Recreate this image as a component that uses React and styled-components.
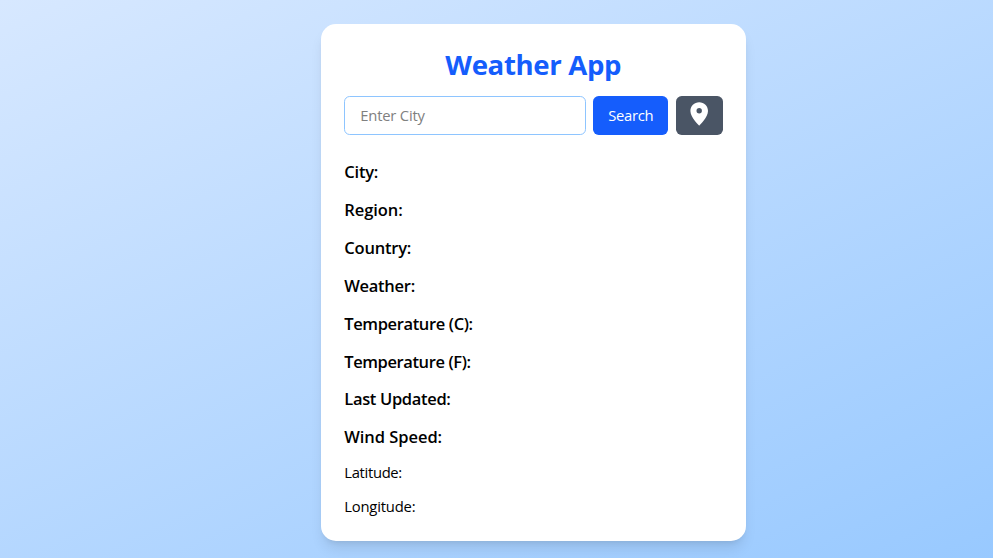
import React from "react";
import styled, { createGlobalStyle } from "styled-components";

const GlobalStyle = createGlobalStyle`
  *, *::before, *::after { box-sizing: border-box; }
  body {
    margin: 0;
    color: #000;
    font-family: "Open Sans", "Noto Sans", sans-serif;
  }
`;

const Page = styled.main`
  min-height: 100vh;
  display: flex;
  justify-content: center;
  align-items: flex-start;
  padding: 24px 0 17px 74px;
  background: linear-gradient(155deg, #d7e8ff, #98c9ff);
  overflow: hidden;
`;

const Card = styled.section`
  width: 425px;
  height: 517px;
  margin-right: 0.5px;
  padding: 22.9px 23px 0;
  border-radius: 15px;
  background: #fff;
  box-shadow: 0 9.5px 14px -3px rgba(0, 0, 0, 0.1), 0 4px 6px -4px rgba(0, 0, 0, 0.1);
`;

const Title = styled.h1`
  margin: 0 0 15px;
  font-size: 27.6px;
  line-height: 34.1px;
  letter-spacing: -0.35px;
  font-weight: 700;
  text-align: center;
  color: #155dfc;
  white-space: nowrap;
`;

const SearchBar = styled.form`
  display: flex;
  height: 39px;
  gap: 7.5px;
  margin-bottom: 24.25px;
`;

const CityInput = styled.input`
  width: 242px;
  padding: 0 15px 0 15.5px;
  border: 1px solid #8ec5ff;
  border-radius: 5.7px;
  outline: none;
  background: #fff;
  font: 400 14.8px "Open Sans", sans-serif;
  letter-spacing: -0.2px;
  &::placeholder { color: #808080; opacity: 1; }
`;

const Button = styled.button`
  display: flex;
  align-items: center;
  justify-content: center;
  width: ${(p) => p.$width}px;
  padding: 0;
  border: 0;
  border-radius: 5.7px;
  background: ${(p) => p.$color};
  color: #fff;
  font: 400 14.8px "Open Sans", sans-serif;
  letter-spacing: -0.35px;
`;

const Pin = styled.svg`
  width: 18px;
  height: 24px;
  margin: 0 0 3px;
`;

const Row = styled.p`
  margin: 0 0 ${(p) => (p.$small ? "12.4px" : "11.37px")} 0.5px;
  font-size: ${(p) => (p.$small ? "14.8px" : "16.5px")};
  font-weight: ${(p) => (p.$small ? 400 : 600)};
  line-height: ${(p) => (p.$small ? "21.4px" : "26.5px")};
  letter-spacing: ${(p) => p.$spacing}px;
`;

const fields = [
  { label: "City:", spacing: -0.2 },
  { label: "Region:", spacing: -0.05 },
  { label: "Country:", spacing: -0.2 },
  { label: "Weather:", spacing: -0.27 },
  { label: "Temperature (C):", spacing: -0.37 },
  { label: "Temperature (F):", spacing: -0.4 },
  { label: "Last Updated:", spacing: -0.33 },
  { label: "Wind Speed:", spacing: -0.05 },
  { label: "Latitude:", small: true, spacing: -0.32 },
  { label: "Longitude:", small: true, spacing: -0.2 },
];

export default function App() {
  return (
    <>
      <GlobalStyle />
      <Page>
        <Card>
          <Title>Weather App</Title>
          <SearchBar onSubmit={(e) => e.preventDefault()}>
            <CityInput placeholder="Enter City" />
            <Button $width={75} $color="#155dfc">Search</Button>
            <Button $width={47} $color="#4a5565" type="button" aria-label="Use my location">
              <Pin viewBox="0 0 18 24" fill="currentColor">
                <path fillRule="evenodd" d="M9.2.3C4.3.3.4 4.2.4 9.1.4 15.4 9.2 23.7 9.2 23.7S18 15.4 18 9.1C18 4.2 14.1.3 9.2.3Zm0 5.7a2.7 2.7 0 1 1 0 5.4A2.7 2.7 0 0 1 9.2 6Z" />
              </Pin>
            </Button>
          </SearchBar>
          {fields.map((f) => (
            <Row key={f.label} $small={f.small} $spacing={f.spacing}>
              {f.label}
            </Row>
          ))}
        </Card>
      </Page>
    </>
  );
}
